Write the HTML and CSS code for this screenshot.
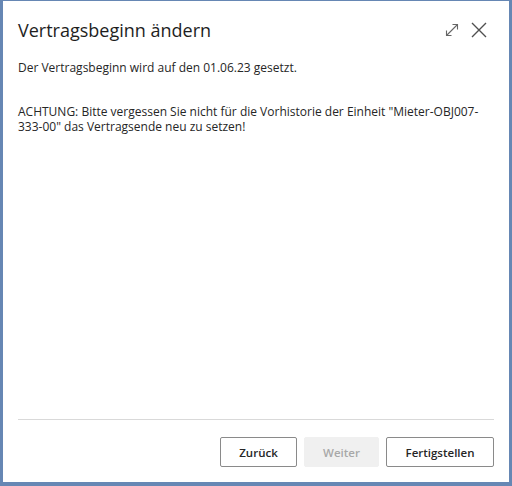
FILE: index.html
```html
<!DOCTYPE html>
<html lang="de">
<head>
<meta charset="utf-8">
<title>Vertragsbeginn ändern</title>
<link rel="stylesheet" href="styles.css">
</head>
<body>
<div class="window">
  <div class="header">
    <h1 class="title">Vertragsbeginn ändern</h1>
    <div class="actions">
      <button class="icon-btn" aria-label="Maximieren">
        <svg width="14" height="14" viewBox="0 0 14 14" fill="none" stroke="#666" stroke-width="1.1">
          <path d="M1.5 12.5 L12.5 1.5"/>
          <path d="M7.5 1.5 H12.5 V6.5"/>
          <path d="M1.5 7.5 V12.5 H6.5"/>
        </svg>
      </button>
      <button class="icon-btn" aria-label="Schließen">
        <svg width="16" height="16" viewBox="0 0 16 16" fill="none" stroke="#505050" stroke-width="1.4">
          <path d="M1 1 L15 15 M15 1 L1 15"/>
        </svg>
      </button>
    </div>
  </div>
  <div class="content">
    <p class="msg">Der Vertragsbeginn wird auf den 01.06.23 gesetzt.</p>
    <p class="msg">ACHTUNG: Bitte vergessen Sie nicht für die Vorhistorie der Einheit "Mieter-OBJ007-333-00" das Vertragsende neu zu setzen!</p>
  </div>
  <div class="footer">
    <button class="btn">Zurück</button>
    <button class="btn btn-disabled" disabled>Weiter</button>
    <button class="btn btn-wide">Fertigstellen</button>
  </div>
</div>
</body>
</html>
```
FILE: styles.css
```css
* { box-sizing: border-box; }
html, body {
  margin: 0;
  padding: 0;
  background: #ffffff;
}
body {
  font-family: "Open Sans", "Noto Sans", sans-serif;
  color: #212121;
}
.window {
  width: 512px;
  height: 486px;
  border-left: 3px solid #6687b4;
  border-top: 1px solid #6687b4;
  border-right: 3px solid #6687b4;
  border-bottom: 4px solid #6687b4;
  background: #fff;
  display: flex;
  flex-direction: column;
  padding: 0 15px;
}
.header {
  display: flex;
  align-items: center;
  justify-content: space-between;
  height: 55px;
  padding-top: 2px;
}
.title {
  margin: 0;
  font-size: 18px;
  font-weight: 400;
  color: #1e1e1e;
}
.actions {
  display: flex;
  align-items: center;
  gap: 12px;
  margin-right: 7px;
}
.icon-btn {
  background: none;
  border: none;
  padding: 0;
  display: flex;
  align-items: center;
}
.content {
  flex: 1;
  padding-top: 4px;
}
.msg {
  margin: 0 0 29px 0;
  font-size: 12px;
  line-height: 15px;
  color: #262626;
}
.footer {
  border-top: 1px solid #d9d9d9;
  display: flex;
  justify-content: flex-end;
  gap: 7px;
  padding-top: 17px;
  height: 63px;
}
.btn {
  font-family: "Open Sans", "Noto Sans", sans-serif;
  font-size: 11.5px;
  font-weight: 600;
  color: #262626;
  background: #fff;
  border: 1px solid #8a8a8a;
  border-radius: 2px;
  height: 30px;
  width: 77px;
  padding: 0;
}
.btn-disabled {
  background: #f0f0f0;
  border-color: #f0f0f0;
  color: #a8a8a8;
  width: 75px;
}
.btn-wide {
  width: 108px;
}
```
